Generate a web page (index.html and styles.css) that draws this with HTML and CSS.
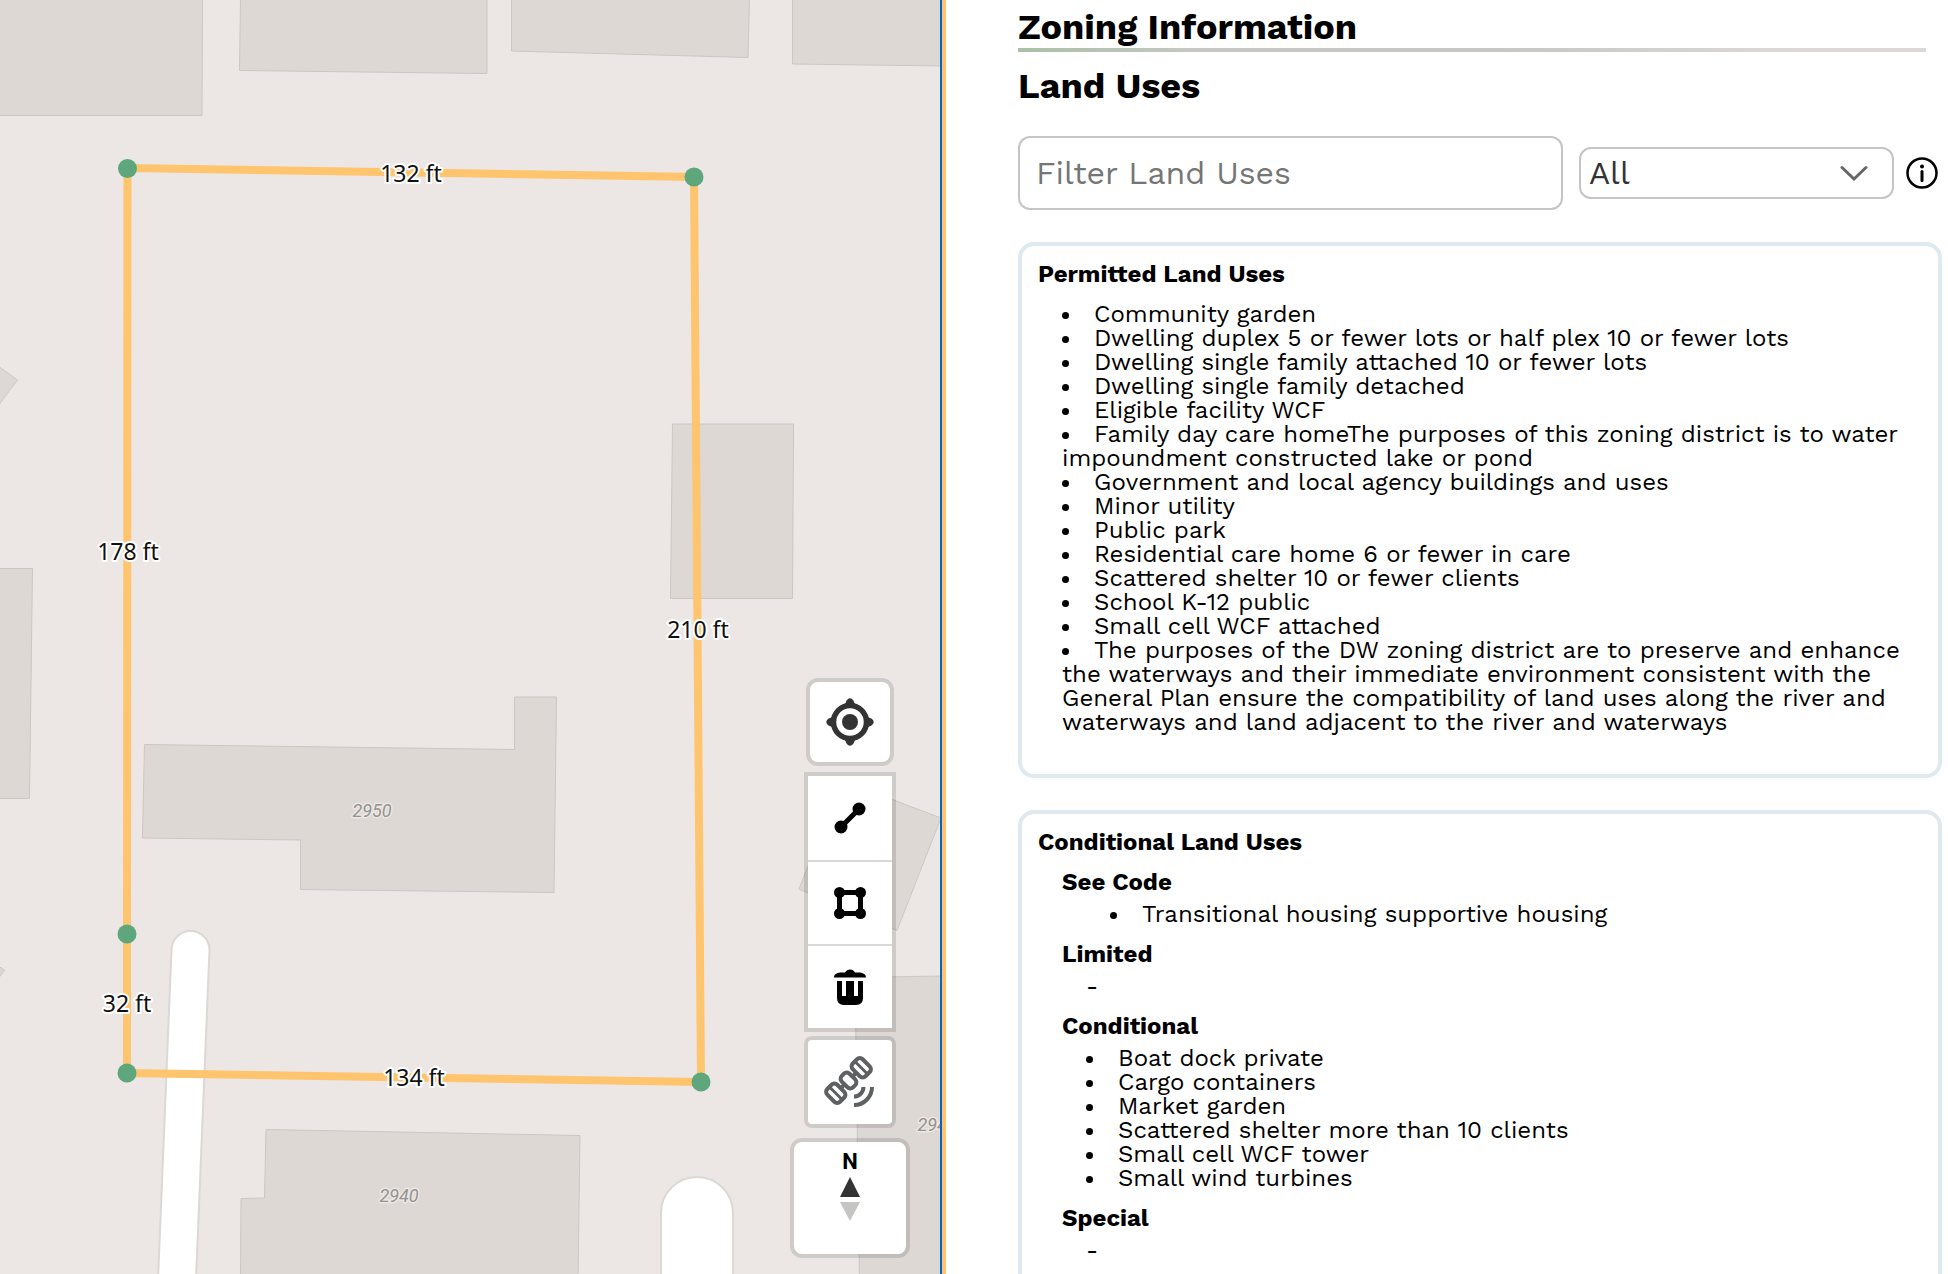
FILE: index.html
```html
<!DOCTYPE html>
<html lang="en">
<head>
<meta charset="utf-8">
<title>Zoning Information</title>
<link rel="stylesheet" href="styles.css">
</head>
<body>
<main class="app">
  <section class="map" aria-label="Parcel map">
    <svg class="map-canvas" width="940" height="1274" viewBox="0 0 940 1274" aria-label="Parcel outline with side lengths">
      <g class="buildings">
        <path d="M-2 -2H202.500L202 115.500H-2Z"/>
        <path d="M240.500 -2L239.500 70.500L487 73.500V-2Z"/>
        <path d="M511.500 -2V51L748 57.500L749.500 -2Z"/>
        <path d="M792.500 -2V64L942 66V-2Z"/>
        <path d="M-2 366L17.500 380L-2 406Z"/>
        <path d="M-2 568.500H32.500L29.500 798.500H-2Z"/>
        <path d="M-2 966L4.500 970L-2 979Z"/>
        <path d="M672.500 424H793.500L792.500 598.500H670.500Z"/>
        <path d="M144.500 744.500L514.500 749.500V697H556.500L554 892.500L300.500 889.500V840L142.500 838Z"/>
        <path d="M266 1129.500L580 1135.500L578 1280H240.500L241 1198.500L264.500 1198Z"/>
        <path d="M870 791L941 818L897 930.500L799 889L830 810Z"/>
        <path d="M855 977.500L942 976V1280H859.500Z"/>
      </g>
      <g class="roads">
        <path d="M158 1280L171.500 950A19 19 0 0 1 209.500 950L196 1280Z"/>
        <path d="M661 1280V1213A36 36 0 0 1 733 1213V1280Z"/>
      </g>
      <g class="house-numbers">
        <text x="372" y="817">2950</text>
        <text x="399" y="1202">2940</text>
        <text x="937" y="1131">2944</text>
      </g>
      <path class="parcel" d="M127.500 168L694 177L701 1082L127 1073V934Z"/>
      <g class="corners">
        <circle cx="127.500" cy="168.500" r="9.500"/><circle cx="694" cy="177" r="9.500"/><circle cx="701" cy="1082" r="9.500"/><circle cx="127" cy="1073" r="9.500"/><circle cx="127" cy="934" r="9.500"/>
      </g>
      <g class="lengths">
        <text x="411" y="182">132 ft</text>
        <text x="128" y="560">178 ft</text>
        <text x="698" y="638">210 ft</text>
        <text x="127" y="1012">32 ft</text>
        <text x="414" y="1086">134 ft</text>
      </g>
    </svg>
    <div class="map-controls">
      <button class="control control-locate" aria-label="Find my location">
        <svg width="48" height="48" viewBox="0 0 48 48"><g fill="#333"><circle cx="24" cy="24" r="8"/><circle cx="24" cy="24" r="16.500" fill="none" stroke="#333" stroke-width="5.500"/><path d="M19 6Q20 4 20.500 2.500Q24 -2 27.500 2.500Q28 4 29 6ZM19 42Q20 44 20.500 45.500Q24 50 27.500 45.500Q28 44 29 42ZM6 19Q4 20 2.500 20.500Q-2 24 2.500 27.500Q4 28 6 29ZM42 19Q44 20 45.500 20.500Q50 24 45.500 27.500Q44 28 42 29Z"/></g></svg>
      </button>
      <div class="control-group">
        <button aria-label="Measure line">
          <svg width="36" height="36" viewBox="0 0 36 36"><path d="M9 27L27 9" stroke="#000" stroke-width="5"/><circle cx="9" cy="27" r="6.500"/><circle cx="27" cy="9" r="6.500"/></svg>
        </button>
        <button aria-label="Measure area">
          <svg width="36" height="36" viewBox="0 0 36 36"><rect x="7.500" y="7.500" width="21" height="21" rx="2" fill="none" stroke="#000" stroke-width="5"/><circle cx="7.500" cy="7.500" r="5.500"/><circle cx="28.500" cy="7.500" r="5.500"/><circle cx="7.500" cy="28.500" r="5.500"/><circle cx="28.500" cy="28.500" r="5.500"/></svg>
        </button>
        <button aria-label="Delete">
          <svg width="36" height="36" viewBox="0 0 36 36"><path fill-rule="evenodd" d="M2 8.500C2 5 5 4 8 3.500H13C15-.5 21-.5 23 3.500H28C31 4 34 5 34 8.500ZM5 12H10V27H14V12H22V27H26V12H31V29Q31 36 24 36H12Q5 36 5 29Z"/></svg>
        </button>
      </div>
      <button class="control control-imagery" aria-label="Satellite imagery">
        <svg width="52" height="52" viewBox="0 0 52 52" fill="none" stroke="#5f6062" stroke-width="4"><g transform="rotate(-45 24.500 24.500)"><rect x="-0.500" y="15.500" width="14" height="18" rx="4"/><rect x="19" y="16.500" width="11" height="16" rx="4"/><rect x="35.500" y="15.500" width="14" height="18" rx="4"/><path d="M13.500 24.500h5.500M30 24.500h5.500"/><path stroke-width="3" d="M6.500 16v17M42.500 16v17"/></g><path d="M30 40.500A9.500 9.500 0 0 0 39.500 31M30 49A18 18 0 0 0 48 31"/></svg>
      </button>
      <button class="control control-compass" aria-label="Reset north">
        <span>N</span>
        <svg width="20" height="44" viewBox="0 0 20 44"><path d="M10 0L20 20H0Z" fill="#333"/><path d="M10 44L20 25H0Z" fill="#c5c5c3"/></svg>
      </button>
    </div>
  </section>

  <section class="panel">
    <h1>Zoning Information</h1>
    <h2>Land Uses</h2>
    <form class="filters">
      <input class="filter-text" type="text" placeholder="Filter Land Uses" aria-label="Filter Land Uses">
      <div class="filter-select">
        <select aria-label="Land use type"><option>All</option></select>
        <svg width="28" height="18" viewBox="0 0 28 18" fill="none" stroke="#666" stroke-width="3" stroke-linecap="round"><path d="M2 2.500L14 14L26 2.500"/></svg>
      </div>
      <button class="info" type="button" aria-label="About land uses">
        <svg width="32" height="32" viewBox="0 0 32 32"><circle cx="16" cy="16" r="14.500" fill="none" stroke="#000" stroke-width="2.500"/><circle cx="16" cy="9.500" r="2"/><path d="M16 14.500V23.500" stroke="#000" stroke-width="3" stroke-linecap="round"/></svg>
      </button>
    </form>

    <article class="card permitted">
      <h3>Permitted Land Uses</h3>
      <ul>
        <li>Community garden</li>
        <li>Dwelling duplex 5 or fewer lots or half plex 10 or fewer lots</li>
        <li>Dwelling single family attached 10 or fewer lots</li>
        <li>Dwelling single family detached</li>
        <li>Eligible facility WCF</li>
        <li>Family day care homeThe purposes of this zoning district is to water impoundment constructed lake or pond</li>
        <li>Government and local agency buildings and uses</li>
        <li>Minor utility</li>
        <li>Public park</li>
        <li>Residential care home 6 or fewer in care</li>
        <li>Scattered shelter 10 or fewer clients</li>
        <li>School K-12 public</li>
        <li>Small cell WCF attached</li>
        <li>The purposes of the DW zoning district are to preserve and enhance the waterways and their immediate environment consistent with the General Plan ensure the compatibility of land uses along the river and waterways and land adjacent to the river and waterways</li>
      </ul>
    </article>

    <article class="card conditional">
      <h3>Conditional Land Uses</h3>
      <h4>See Code</h4>
      <ul class="nested"><li>Transitional housing supportive housing</li></ul>
      <h4>Limited</h4>
      <p>-</p>
      <h4>Conditional</h4>
      <ul>
        <li>Boat dock private</li>
        <li>Cargo containers</li>
        <li>Market garden</li>
        <li>Scattered shelter more than 10 clients</li>
        <li>Small cell WCF tower</li>
        <li>Small wind turbines</li>
      </ul>
      <h4>Special</h4>
      <p>-</p>
    </article>
  </section>
</main>
</body>
</html>
```
FILE: styles.css
```css
* { box-sizing: border-box; }

body {
  margin: 0;
  background: #fff;
  color: #000;
  font: 24px/24px "Work Sans", "Noto Sans", sans-serif;
}

h1, h2, h3, h4, p, ul { margin: 0; padding: 0; }

.app {
  display: grid;
  grid-template-columns: 946fr 1002fr;
  grid-template-rows: minmax(0, 1fr);
  height: 100vh;
  overflow: hidden;
}

/* Map */
.map {
  position: relative;
  overflow: hidden;
  background: #ece7e4;
  border-right: 4px solid #fec46e;
}
.map::after {
  content: "";
  position: absolute;
  inset: 0 0 0 auto;
  width: 2px;
  background: #0862c6;
}
.map-canvas { display: block; }
.buildings { fill: #ddd8d4; stroke: #c8c8c5; stroke-width: 1; }
.roads { fill: #fff; stroke: #dcd8d5; stroke-width: 2; }
.parcel { fill: none; stroke: #fec46e; stroke-width: 8; }
.corners { fill: #5ea67c; }
.lengths, .house-numbers { text-anchor: middle; paint-order: stroke; stroke-linejoin: round; }
.lengths { font: 23px "Noto Sans", sans-serif; fill: #111; stroke: #fff; stroke-width: 4px; }
.house-numbers { font: italic 18px Roboto, sans-serif; fill: #939392; stroke: #ece7e4; stroke-width: 3px; }

.map-controls {
  position: absolute;
  right: 32px;
  bottom: 16px;
  width: 120px;
  display: flex;
  flex-direction: column;
  align-items: center;
}
.map-controls button {
  display: flex;
  align-items: center;
  justify-content: center;
  padding: 0;
  border: 0;
  background: #fff;
}
.map-controls .control {
  width: 88px;
  height: 88px;
  border: 4px solid rgba(0, 0, 0, .12);
  border-radius: 12px;
  background-clip: padding-box;
}
.control-group {
  margin: 6px 0 4px;
  border: 4px solid rgba(0, 0, 0, .12);
}
.control-group button { width: 84px; height: 84px; }
.control-group button + button { border-top: 2px solid #dcd8d5; }
.map-controls .control-imagery { width: 92px; height: 92px; border-radius: 8px; }
.map-controls .control-compass {
  width: 120px;
  height: 120px;
  margin-top: 10px;
  flex-direction: column;
  justify-content: flex-start;
  padding-top: 8px;
  gap: 3px;
  font: bold 22px/24px Roboto, sans-serif;
  color: #000;
}

/* Zoning panel */
.panel { padding: 7px 6px 0 72px; min-width: 0; }
.panel h1, .panel h2 { font-size: 36px; line-height: 40px; font-weight: 700; }
.panel h1 {
  margin-right: 16px;
  padding-bottom: 1px;
  border-bottom: 4px solid;
  border-image: linear-gradient(90deg, #a9c0a5, #c5c8c3 19%, #c5c8c3 53%, #dcd8d5 85%) 1;
}
.panel h2 { margin-top: 14px; }

.filters { display: flex; align-items: center; margin: 30px 0 32px; }
.filter-text {
  flex: 1;
  min-width: 0;
  height: 74px;
  padding: 0 16px;
  border: 2px solid #c5c5c3;
  border-radius: 12px;
  font: 32px/40px "Work Sans", "Noto Sans", sans-serif;
}
.filter-text::placeholder { color: #757575; opacity: 1; }
.filter-select { position: relative; width: 315px; margin: 0 12px 0 16px; }
.filter-select select {
  appearance: none;
  display: block;
  width: 100%;
  height: 52px;
  padding: 0 8px;
  border: 2px solid #c5c5c3;
  border-radius: 12px;
  background: #fff;
  color: #333;
  font: 32px/40px "Work Sans", "Noto Sans", sans-serif;
}
.filter-select svg { position: absolute; right: 26px; top: 18px; pointer-events: none; }
.info { display: flex; margin-right: 4px; padding: 0; border: 0; background: none; }

.card {
  padding: 16px 16px 40px;
  border: 4px solid #dfe9f0;
  border-radius: 16px;
}
.card + .card { margin-top: 32px; }
.card h3, .card h4 { font-size: 24px; line-height: 24px; font-weight: 700; }
.card ul { list-style: disc inside; }
.permitted ul { margin: 16px 0 0 24px; }
.conditional h4 { margin: 16px 0 8px 24px; }
.conditional ul { margin-left: 48px; }
.conditional .nested { margin-left: 72px; }
.conditional p { margin-left: 48px; }
```
